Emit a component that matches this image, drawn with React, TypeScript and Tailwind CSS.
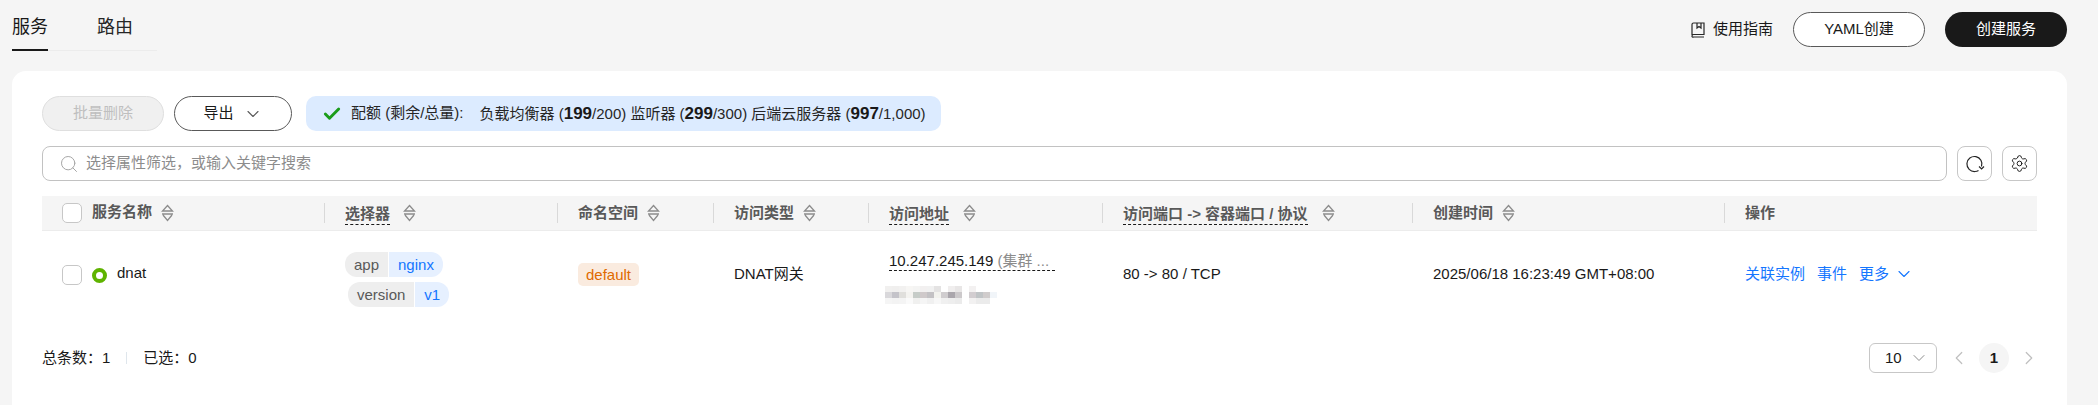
import React from 'react';
import { ChevronDown, ChevronLeft, ChevronRight, Search, Settings, Check } from 'lucide-react';

const SortIcon = () => (
  <svg width="13" height="18" viewBox="0 0 13 18" fill="none" stroke="#8c8c8c" strokeWidth="1.3" className="shrink-0">
    <path d="M6.5 1.5 L11.5 7 H1.5 Z" />
    <path d="M1 10 H12 M2 11 L6.5 16.5 L11 11" />
  </svg>
);

const BookIcon = () => (
  <svg width="14" height="16" viewBox="0 0 14 16" fill="none" stroke="#262626" strokeWidth="1.2">
    <path d="M1 13 V2.5 A1.5 1.5 0 0 1 2.5 1 H13 V12.5 H2.5 A1.5 1.5 0 0 0 1 14 A1 1 0 0 0 2.5 15 H13" />
    <path d="M6 1 V6 L8 4.6 L10 6 V1" />
  </svg>
);

const RefreshIcon = () => (
  <svg width="20" height="20" viewBox="0 0 20 20" fill="none" stroke="#262626" strokeWidth="1.2">
    <path d="M16.5 12.5 A7.5 7.5 0 1 0 10 17.5 C11.5 17.5 12.5 17.2 13.5 16.5" />
    <path d="M14 12.5 L16.6 15 L19 12.5" />
  </svg>
);

const mosaic = [
  ['#f1f0ef', '#f0efee', '#f2f1f0', '#f7f6f4', '#f4f4f3', '#f2f0f0', '#f1f1f1', '#e4e3e3', '#ffffff', '#f0eeee', '#e8e6e6', '#ffffff', '#f3f1f1', '#ffffff', '#ffffff', '#ffffff'],
  ['#d9d8db', '#c4c3c9', '#e0dfdc', '#f4f3f0', '#c6ccc8', '#cfc9ca', '#c3c1c4', '#f2f2ee', '#d0cdcf', '#aaa6ac', '#ccc9cb', '#ffffff', '#d2cdd0', '#c0c4c6', '#d0cccc', '#f1f5f9'],
  ['#f5f5f5', '#f3f3f3', '#f4f4f4', '#fafafa', '#f0f0ef', '#f5f5f5', '#f0f0f0', '#f7f7f7', '#f0f0f0', '#eeeeee', '#ebebeb', '#ffffff', '#f2f1f1', '#ebebeb', '#ebebeb', '#ffffff'],
];

const Mosaic = () => (
  <svg width="112" height="18" viewBox="0 0 112 18" className="-ml-1 mt-[15px] block">
    {mosaic.map((row, y) =>
      row.map((c, x) => <rect key={`${x}-${y}`} x={x * 7} y={y * 6} width="7" height="6" fill={c} />)
    )}
  </svg>
);

const Checkbox = () => <div className="w-5 h-5 shrink-0 rounded-[5px] border border-[#c7c7c7] bg-white" />;

const HeadCell = ({ label, dashed, gap = 'gap-[9px]' }: { label: string; dashed?: boolean; gap?: string }) => (
  <div className={`flex items-center ${gap} pl-5 h-[20px] border-l border-[#d9d9d9]`}>
    <span className={dashed ? 'border-b border-dashed border-[#191919] leading-[21px] h-[22px] mt-[1px] whitespace-nowrap' : 'leading-[20px] -mt-[1px]'}>{label}</span>
    <SortIcon />
  </div>
);

const Tag = ({ k, v, className }: { k: string; v: string; className: string }) => (
  <div className={`flex h-[25px] leading-[25px] gap-px ${className}`}>
    <span className="px-[9px] rounded-l-[12px] bg-[#eeeeee] text-[#595959]">{k}</span>
    <span className="px-[9px] rounded-r-[12px] bg-[#e6f0ff] text-[#1476ff]">{v}</span>
  </div>
);

const columns = 'grid grid-cols-[282px_233px_156px_155px_234px_310px_312px_313px]';

export default function App() {
  return (
    <div className="w-[2098px] h-[405px] overflow-hidden bg-[#f5f5f5] text-[15px] text-[#191919] font-['Liberation_Sans','Noto_Sans_CJK_SC',sans-serif]">
      {/* Top: tabs and actions */}
      <div className="flex justify-between items-start h-[71px] pl-3 pr-[31px]">
        <div className="flex w-[145px] h-[51px] border-b border-[#ececec] text-[18px] items-start whitespace-nowrap">
          <div className="w-[36px] h-[51px] pt-[14px] border-b-2 border-[#191919] leading-[27px]">服务</div>
          <div className="ml-[49px] pt-[14px] leading-[27px] text-[#262626]">路由</div>
        </div>
        <div className="flex items-center pt-3">
          <BookIcon />
          <span className="ml-[8px] w-[60px] whitespace-nowrap">使用指南</span>
          <button className="ml-5 w-[132px] h-[35px] rounded-full border border-[#595959] bg-white">YAML创建</button>
          <button className="ml-5 w-[122px] h-[35px] rounded-full bg-[#191919] text-white">创建服务</button>
        </div>
      </div>

      {/* Card */}
      <div className="ml-3 w-[2055px] h-[334px] bg-white rounded-t-[14px] pt-[25px] pl-[30px] pr-[30px]">
        <div className="flex items-center">
          <button className="w-[122px] h-[35px] rounded-full bg-[#f0f0f0] border border-[#dfdfdf] text-[#bfbfbf]">批量删除</button>
          <button className="ml-[10px] w-[118px] h-[35px] rounded-full border border-[#595959] flex items-center justify-center gap-[9px]">
            导出
            <ChevronDown size={20} strokeWidth={1.3} className="text-[#595959]" />
          </button>
          <div className="ml-[14px] h-[35px] rounded-[10px] bg-[#dcebff] flex items-center pl-4 pr-[15px] whitespace-nowrap text-[#262626]">
            <Check size={20} strokeWidth={3.5} className="text-[#1a9c1a] mr-[9px]" />
            <span className="mr-[16px]">配额 (剩余/总量):</span>
            <span>
              负载均衡器 (<b className="text-[17px] text-[#191919]">199</b>/200) 监听器 (<b className="text-[17px] text-[#191919]">299</b>/300) 后端云服务器 (<b className="text-[17px] text-[#191919]">997</b>/1,000)
            </span>
          </div>
        </div>

        <div className="mt-[15px] flex gap-[10px]">
          <div className="w-[1905px] h-[35px] rounded-[8px] border border-[#c2c2c2] flex items-center pl-[16px] text-[#8c8c8c]">
            <Search size={20} strokeWidth={1.2} className="text-[#a6a6a6] mr-[7px]" />
            选择属性筛选，或输入关键字搜索
          </div>
          <div className="w-[35px] h-[35px] rounded-[8px] border border-[#c7c7c7] flex items-center justify-center">
            <RefreshIcon />
          </div>
          <div className="w-[35px] h-[35px] rounded-[8px] border border-[#c7c7c7] flex items-center justify-center">
            <Settings size={19} strokeWidth={1.2} />
          </div>
        </div>

        {/* Table */}
        <div className="mt-[15px]">
          <div className={`${columns} h-[35px] items-center bg-[#f5f5f5] border-b border-[#ececec] font-semibold text-[#595959]`}>
            <div className="flex items-center pl-5">
              <Checkbox />
              <span className="ml-[10px] mr-[9px] -mt-[1px]">服务名称</span>
              <SortIcon />
            </div>
            <HeadCell label="选择器" dashed gap="gap-[13px]" />
            <HeadCell label="命名空间" />
            <HeadCell label="访问类型" />
            <HeadCell label="访问地址" dashed gap="gap-[14px]" />
            <HeadCell label="访问端口 -> 容器端口 / 协议" dashed gap="gap-[14px]" />
            <HeadCell label="创建时间" />
            <div className="pl-5 h-[20px] leading-[20px] border-l border-[#d9d9d9]">操作</div>
          </div>

          <div className={`${columns} h-[88px] items-center`}>
            <div className="flex items-center pl-5">
              <Checkbox />
              <span className="ml-[10px] w-[15px] h-[15px] rounded-full border-[4px] border-[#5fb300]" />
              <span className="ml-[10px] -mt-1">dnat</span>
            </div>
            <div className="pl-[21px] flex flex-col gap-[5px] items-start mt-[9px]">
              <Tag k="app" v="nginx" className="" />
              <Tag k="version" v="v1" className="ml-[3px]" />
            </div>
            <div className="pl-[21px] -mt-[1px]">
              <span className="inline-block h-[23px] leading-[23px] px-[8px] rounded-[5px] bg-[#faebdf] text-[#e06a00]">default</span>
            </div>
            <div className="pl-[21px] -mt-[2px]">DNAT网关</div>
            <div className="pl-[21px] mt-[6px]">
              <div className="w-[166px] h-[19px] leading-[18px] border-b border-dashed border-[#191919] whitespace-nowrap overflow-hidden">
                10.247.245.149 <span className="text-[#8c8c8c]">(集群 ...</span>
              </div>
              <Mosaic />
            </div>
            <div className="pl-[21px] -mt-[2px]">{'80 -> 80 / TCP'}</div>
            <div className="pl-[21px] -mt-[2px] whitespace-nowrap">2025/06/18 16:23:49 GMT+08:00</div>
            <div className="pl-[21px] -mt-[2px] flex items-center text-[#1476ff]">
              关联实例
              <span className="ml-3">事件</span>
              <span className="ml-3">更多</span>
              <ChevronDown size={20} strokeWidth={1.3} className="ml-[5px]" />
            </div>
          </div>
        </div>

        {/* Footer */}
        <div className="mt-[24px] h-[30px] flex items-center justify-between">
          <div className="flex items-center">
            总条数：1
            <span className="mx-4 w-px h-3 bg-[#dfe6ec]" />
            已选：0
          </div>
          <div className="flex items-center -mr-[3px]">
            <div className="w-[68px] h-[30px] rounded-[6px] border border-[#c7c7c7] flex items-center pl-[15px] justify-between pr-[7px]">
              10
              <ChevronDown size={20} strokeWidth={1.2} className="text-[#8c8c8c]" />
            </div>
            <ChevronLeft size={22} strokeWidth={1.3} className="ml-[11px] text-[#bfbfbf]" />
            <div className="ml-[9px] w-[30px] h-[30px] rounded-full bg-[#f5f5f5] flex items-center justify-center font-bold">1</div>
            <ChevronRight size={22} strokeWidth={1.3} className="ml-[9px] text-[#bfbfbf]" />
          </div>
        </div>
      </div>
    </div>
  );
}
